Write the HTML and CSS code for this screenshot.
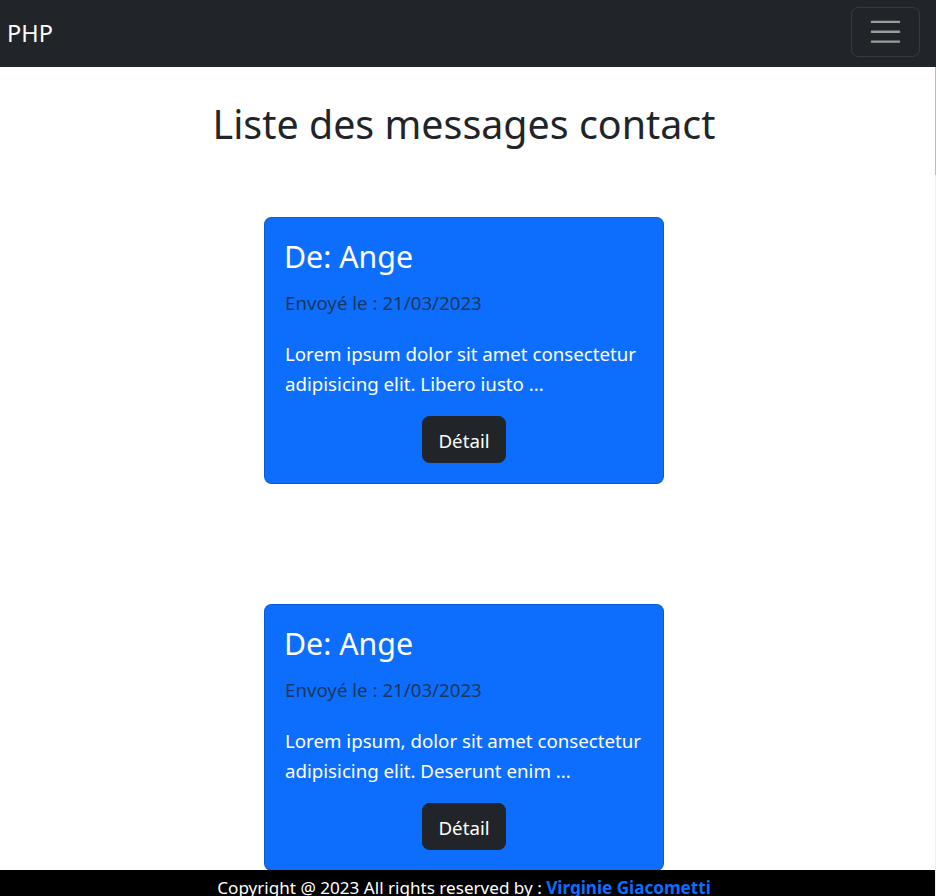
FILE: index.html
```html
<!DOCTYPE html>
<html lang="fr">
<head>
<meta charset="utf-8">
<title>Liste des messages contact</title>
<link rel="stylesheet" href="styles.css">
</head>
<body>
<nav class="navbar">
  <a class="brand" href="#">PHP</a>
  <button class="toggler" type="button" aria-label="Menu">
    <svg class="toggler-icon" viewBox="0 0 30 30" aria-hidden="true"><path d="M4 7h22M4 15h22M4 23h22" stroke="rgba(255,255,255,0.55)" stroke-width="2" stroke-linecap="round" stroke-miterlimit="10" fill="none"/></svg>
  </button>
</nav>
<main class="main">
  <h1 class="page-title">Liste des messages contact</h1>
  <div class="card-wrap">
    <div class="card">
      <div class="card-body">
        <h3 class="card-title">De: Ange</h3>
        <p class="card-subtitle">Envoyé le : 21/03/2023</p>
        <p class="card-text">Lorem ipsum dolor sit amet consectetur adipisicing elit. Libero iusto ...</p>
        <div class="card-actions"><a class="btn" href="#">Détail</a></div>
      </div>
    </div>
  </div>
  <div class="card-wrap">
    <div class="card">
      <div class="card-body">
        <h3 class="card-title">De: Ange</h3>
        <p class="card-subtitle">Envoyé le : 21/03/2023</p>
        <p class="card-text">Lorem ipsum, dolor sit amet consectetur adipisicing elit. Deserunt enim ...</p>
        <div class="card-actions"><a class="btn" href="#">Détail</a></div>
      </div>
    </div>
  </div>
</main>
<footer class="footer">
  Copyright @ 2023 All rights reserved by : <a class="footer-link" href="#">Virginie Giacometti</a>
</footer>
<div class="scrollbar"><div class="scrollbar-thumb"></div></div>
</body>
</html>
```
FILE: styles.css
```css
* { box-sizing: border-box; }
html, body { margin: 0; padding: 0; }
body {
  font-family: "Noto Sans", "Open Sans", sans-serif;
  font-size: 18.7px;
  line-height: 30px;
  color: #212529;
  background: #fff;
}
.navbar {
  height: 67px;
  background: #212529;
  display: flex;
  align-items: flex-start;
  justify-content: space-between;
  padding: 0 16px 0 7px;
}
.brand {
  color: #fff;
  text-decoration: none;
  font-size: 23.5px;
  line-height: 30px;
  margin-top: 18px;
}
.toggler {
  margin-top: 7px;
  width: 69px;
  height: 50px;
  padding: 5px 15px;
  background: transparent;
  border: 1px solid rgba(255,255,255,0.1);
  border-radius: 7.5px;
  display: flex;
  align-items: center;
  justify-content: center;
}
.toggler-icon { width: 37.5px; height: 37.5px; display: block; }
.main {
  display: flex;
  flex-direction: column;
  padding-right: 8px;
  padding-bottom: 60px;
}
.page-title {
  margin: 32px 0 8px;
  text-align: center;
  font-size: 39.4px;
  line-height: 50px;
  font-weight: 400;
  color: #212529;
}
.card-wrap {
  margin: 60px 0;
  display: flex;
  justify-content: center;
}
.card {
  width: 400px;
  background: #0d6efd;
  border: 1px solid rgba(0,0,0,0.175);
  border-radius: 7.5px;
  color: #fff;
}
.card-body { padding: 20px 20px 20px 19px; }
.card-title {
  margin: 0 0 12px;
  font-size: 30.3px;
  line-height: 38px;
  font-weight: 400;
}
.card-subtitle {
  margin: 0 0 21px 1px;
  color: #1c375e;
}
.card-text { margin: 0 0 17px 1px; }
.card-actions { display: flex; justify-content: center; padding-left: 1px; }
.btn {
  display: inline-block;
  background: #212529;
  border: 1px solid #212529;
  color: #fff;
  text-decoration: none;
  border-radius: 7.5px;
  padding: 9px 15px 6px;
  line-height: 30px;
  font-size: 18.7px;
}
.footer {
  position: fixed;
  left: 0;
  right: 0;
  bottom: 0;
  height: 26px;
  overflow: hidden;
  background: #000;
  color: #fff;
  text-align: center;
  padding: 3px 8px 0 0;
  font-size: 17.1px;
  line-height: 30px;
  white-space: nowrap;
}
.footer-link { color: #0d6efd; font-weight: 700; text-decoration: none; }
.scrollbar {
  position: fixed;
  right: 0;
  top: 67px;
  bottom: 0;
  width: 1px;
  background: #efefef;
}
.scrollbar-thumb { height: 108px; background: #bcbcbc; }
```
